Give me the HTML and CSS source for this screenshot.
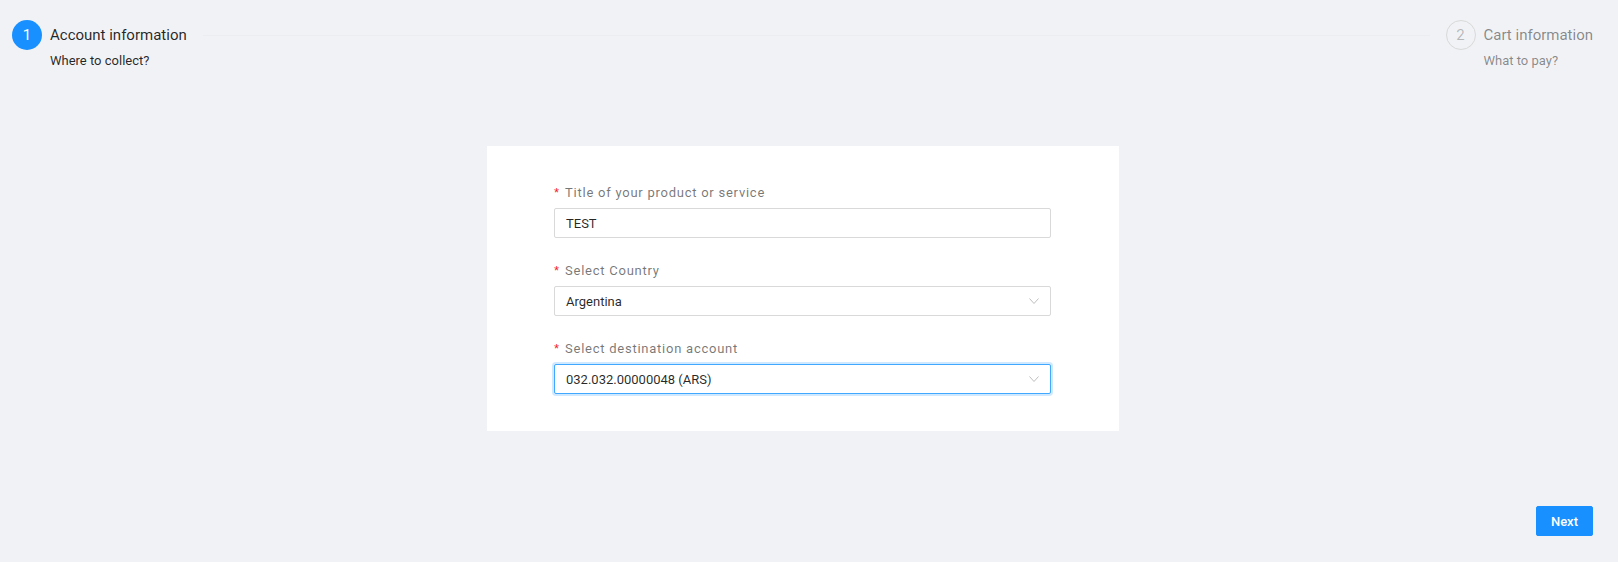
FILE: index.html
```html
<!DOCTYPE html>
<html>

<head>
    <link rel="stylesheet" href="styles.css">
</head>

<body>
    <div class="page">
        <div class="steps">
            <div class="step step-active">
                <div class="step-icon">1</div>
                <div class="step-content">
                    <div class="step-head">
                        <span class="step-title">Account information</span>
                        <span class="step-tail"></span>
                    </div>
                    <div class="step-desc">Where to collect?</div>
                </div>
            </div>
            <div class="step step-wait">
                <div class="step-icon">2</div>
                <div class="step-content">
                    <div class="step-head">
                        <span class="step-title">Cart information</span>
                    </div>
                    <div class="step-desc">What to pay?</div>
                </div>
            </div>
        </div>

        <div class="card">
            <form class="form">
                <div class="field">
                    <label class="label" for="title">Title of your product or service</label>
                    <input class="input" id="title" type="text" value="TEST">
                </div>
                <div class="field">
                    <label class="label">Select Country</label>
                    <div class="select">
                        <span class="select-value">Argentina</span>
                        <svg class="arrow" width="10" height="6" viewBox="0 0 10 6">
                            <polyline points="0.5,0.5 5,5.5 9.5,0.5" fill="none" stroke="#bfbfbf" stroke-width="1"/>
                        </svg>
                    </div>
                </div>
                <div class="field">
                    <label class="label">Select destination account</label>
                    <div class="select select-focused">
                        <span class="select-value">032.032.00000048 (ARS)</span>
                        <svg class="arrow" width="10" height="6" viewBox="0 0 10 6">
                            <polyline points="0.5,0.5 5,5.5 9.5,0.5" fill="none" stroke="#bfbfbf" stroke-width="1"/>
                        </svg>
                    </div>
                </div>
            </form>
        </div>

        <div class="actions">
            <button class="btn-primary" type="button">Next</button>
        </div>
    </div>
</body>

</html>
```

FILE: styles.css
```css
html,
body {
    margin: 0;
    padding: 0;
    background: #f0f2f5;
    font-family: Roboto, "Liberation Sans", sans-serif;
    color: rgba(0, 0, 0, 0.85);
}

.page {
    padding: 20px 25px 0 12px;
}

/* steps */
.steps {
    display: flex;
}

.step {
    display: flex;
}

.step-active {
    flex: 1;
}

.step-icon {
    width: 30px;
    height: 30px;
    border-radius: 50%;
    box-sizing: border-box;
    margin-right: 8px;
    font-size: 15px;
    line-height: 30px;
    text-align: center;
    flex: none;
}

.step-active .step-icon {
    background: #1890ff;
    color: #fff;
}

.step-wait .step-icon {
    border: 1px solid #d9d9d9;
    color: rgba(0, 0, 0, 0.25);
    line-height: 28px;
}

.step-content {
    flex: 1;
}

.step-head {
    display: flex;
    align-items: center;
    height: 30px;
}

.step-title {
    font-size: 15px;
    white-space: nowrap;
}

.step-wait .step-title {
    color: rgba(0, 0, 0, 0.45);
}

.step-tail {
    flex: 1;
    height: 1px;
    background: #ebedf0;
    margin: 0 16px;
}

.step-desc {
    font-size: 13px;
    line-height: 20px;
    margin-top: 1px;
}

.step-wait .step-desc {
    color: rgba(0, 0, 0, 0.45);
}

/* card */
.card {
    width: 632px;
    margin: 75px auto 0;
    background: #fff;
    box-sizing: border-box;
    padding: 36px 0 37px;
}

.form {
    width: 497px;
    margin: 0 auto;
}

.field {
    margin-bottom: 22px;
}

.field:last-child {
    margin-bottom: 0;
}

.label {
    display: block;
    font-size: 13px;
    line-height: 20px;
    padding: 1px 0 5px;
    color: rgba(0, 0, 0, 0.55);
    letter-spacing: 0.75px;
}

.label::before {
    content: "*";
    color: #f5222d;
    margin-right: 6px;
    font-family: SimSun, "Liberation Sans", sans-serif;
    font-size: 13px;
    letter-spacing: 0;
}

.input,
.select {
    display: block;
    width: 100%;
    height: 30px;
    box-sizing: border-box;
    border: 1px solid #d9d9d9;
    border-radius: 2px;
    padding: 0 11px;
    font-family: Roboto, "Liberation Sans", sans-serif;
    font-size: 13px;
    color: rgba(0, 0, 0, 0.85);
    background: #fff;
    outline: none;
}

.select {
    display: flex;
    align-items: center;
    justify-content: space-between;
}

.select-focused {
    border-color: #40a9ff;
    box-shadow: 0 0 0 2px rgba(24, 144, 255, 0.2);
}

.arrow {
    display: block;
}

/* actions */
.actions {
    display: flex;
    justify-content: flex-end;
    margin-top: 75px;
}

.btn-primary {
    height: 30px;
    padding: 0 14px;
    border: 1px solid #1890ff;
    border-radius: 2px;
    background: #1890ff;
    color: #fff;
    font-family: Roboto, "Liberation Sans", sans-serif;
    font-size: 13px;
    font-weight: 500;
    box-shadow: 0 2px 0 rgba(0, 0, 0, 0.045);
    cursor: pointer;
}
```
